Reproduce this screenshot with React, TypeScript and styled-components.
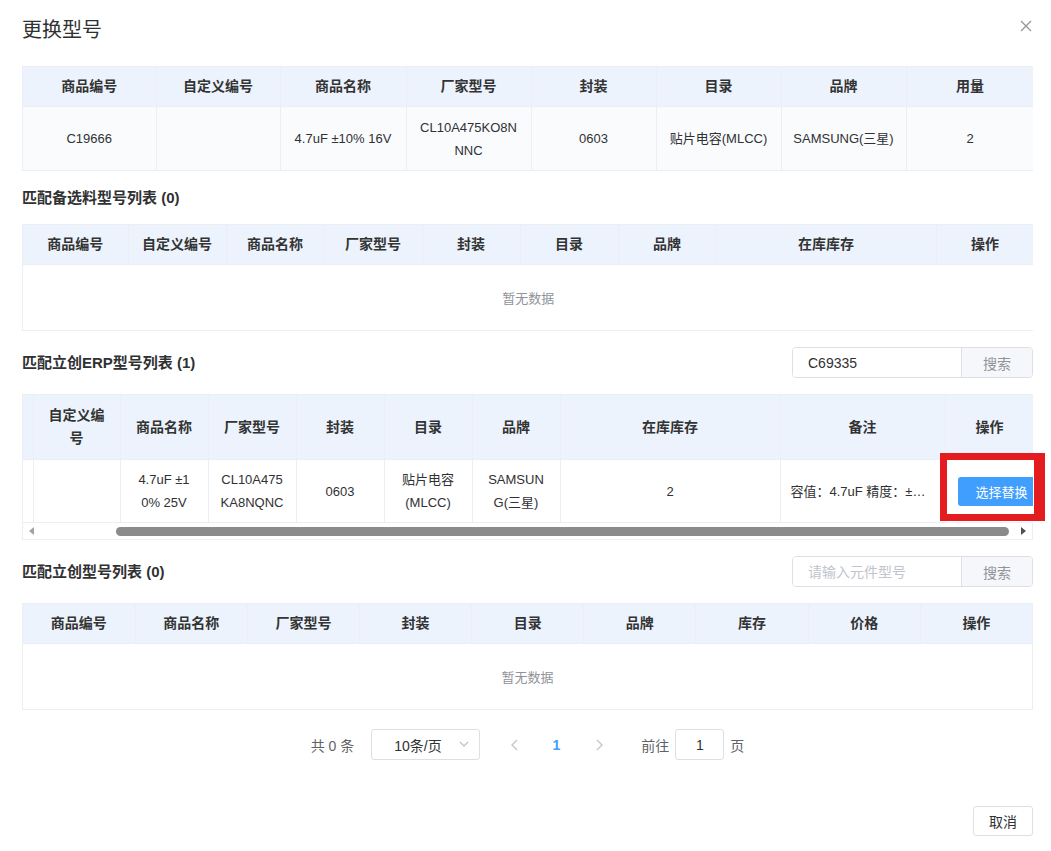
import React from 'react';
import styled, { createGlobalStyle } from 'styled-components';

const borderColor = '#ebeef5';
const headBg = '#ecf3fd';
const textMain = '#303133';
const textMuted = '#909399';
const blue = '#409eff';

const GlobalStyle = createGlobalStyle`
  * { box-sizing: border-box; }
  body {
    margin: 0;
    background: #fff;
    font-family: "Liberation Sans", "Noto Sans CJK SC", sans-serif;
    color: ${textMain};
  }
`;

const Dialog = styled.div`
  width: 1051px;
  padding: 0 18px 0 22px;
`;

const Header = styled.div`
  display: flex;
  justify-content: space-between;
  align-items: center;
  padding-top: 18px;
  margin-bottom: 24px;
`;

const Title = styled.h2`
  margin: 0;
  font-size: 20px;
  line-height: 24px;
  font-weight: 400;
  color: ${textMain};
`;

const CloseBtn = styled.button`
  border: 0;
  background: none;
  padding: 0;
  width: 14px;
  height: 14px;
  margin-top: -8px;
  display: flex;
  align-items: center;
  justify-content: center;
  cursor: pointer;
`;

const TableBox = styled.div`
  border: 1px solid ${borderColor};
  border-right: none;
  border-bottom: none;
  overflow: hidden;
`;

const Table = styled.table`
  width: 100%;
  table-layout: fixed;
  border-collapse: collapse;
`;

const Th = styled.th<{ $py?: number }>`
  background: ${headBg};
  color: #333;
  font-size: 14px;
  font-weight: 700;
  line-height: 23px;
  padding: ${({ $py }) => $py ?? 8}px 10px;
  border-right: 1px solid ${borderColor};
  border-bottom: 1px solid ${borderColor};
  text-align: center;
`;

const Td = styled.td<{ $py?: number; $bg?: string; $align?: string }>`
  font-size: 13px;
  line-height: 23px;
  color: ${textMain};
  padding: ${({ $py }) => $py ?? 8}px 10px;
  background: ${({ $bg }) => $bg ?? '#fff'};
  border-right: 1px solid ${borderColor};
  border-bottom: 1px solid ${borderColor};
  text-align: ${({ $align }) => $align ?? 'center'};
  white-space: pre-line;
`;

const NoteTd = styled(Td)`
  padding-right: 16px;
  white-space: nowrap;
  overflow: hidden;
  text-overflow: ellipsis;
`;

const OpTd = styled(Td)`
  padding-left: 12px;
  padding-right: 0;
  white-space: nowrap;
  overflow: hidden;
`;

const EmptyTd = styled.td`
  height: 66px;
  text-align: center;
  font-size: 13px;
  color: ${textMuted};
  border-right: 1px solid ${borderColor};
  border-bottom: 1px solid ${borderColor};
`;

const SectionHead = styled.div`
  display: flex;
  justify-content: space-between;
  align-items: center;
  padding: 16px 0;
`;

const SectionTitle = styled.h3`
  margin: 0;
  font-size: 15px;
  line-height: 21px;
  font-weight: 700;
  color: ${textMain};
`;

const SearchGroup = styled.div`
  display: flex;
  height: 31px;
  width: 241px;
  border: 1px solid #dcdfe6;
  border-radius: 4px;
  overflow: hidden;
`;

const SearchInput = styled.input`
  width: 168px;
  border: 0;
  outline: none;
  padding: 0 15px;
  font-size: 14px;
  font-family: inherit;
  color: ${textMain};

  &::placeholder {
    color: #c0c4cc;
  }
`;

const SearchBtn = styled.button`
  flex: 1;
  border: 0;
  border-left: 1px solid #dcdfe6;
  background: #f5f7fa;
  color: ${textMuted};
  font-size: 14px;
  font-family: inherit;
  cursor: pointer;
`;

const ErpWrap = styled.div`
  position: relative;
`;

const PrimaryBtn = styled.button`
  height: 29px;
  padding: 0 18px;
  border: 0;
  border-radius: 3px;
  background: ${blue};
  color: #fff;
  font-size: 13px;
  font-family: inherit;
  cursor: pointer;
`;

const Scrollbar = styled.div`
  display: flex;
  align-items: center;
  height: 17px;
  background: #fff;
  border-right: 1px solid ${borderColor};
  border-bottom: 1px solid ${borderColor};
`;

const ScrollArrow = styled.div<{ $dir: 'left' | 'right'; $dim?: boolean }>`
  width: 17px;
  height: 17px;
  display: flex;
  align-items: center;
  justify-content: center;

  &::before {
    content: '';
    border-top: 4px solid transparent;
    border-bottom: 4px solid transparent;
    ${({ $dir, $dim }) =>
      $dir === 'left'
        ? `border-right: 5px solid ${$dim ? '#a3a3a3' : '#505050'};`
        : `border-left: 5px solid ${$dim ? '#a3a3a3' : '#505050'};`}
  }
`;

const ScrollTrack = styled.div`
  flex: 1;
  display: flex;
  height: 100%;
  align-items: center;
`;

const ScrollThumb = styled.div`
  height: 9px;
  border-radius: 5px;
  background: #8b8b8b;
`;

const Highlight = styled.div`
  position: absolute;
  left: 918px;
  top: 59px;
  width: 105px;
  height: 68px;
  border-style: solid;
  border-color: #e41b1f;
  border-width: 7px 11px 7px 7px;
  pointer-events: none;
`;

const Pagination = styled.div`
  display: flex;
  justify-content: center;
  align-items: center;
  height: 31px;
  margin-top: 19px;
  font-size: 14px;
  color: #606266;
`;

const Total = styled.span`
  margin-right: 17px;
`;

const SizeSelect = styled.div`
  position: relative;
  width: 109px;
  height: 31px;
  border: 1px solid #dcdfe6;
  border-radius: 3px;
  display: flex;
  align-items: center;
  padding-left: 22px;
  color: ${textMain};
  font-size: 14px;
`;

const SelectArrow = styled.span`
  position: absolute;
  right: 10px;
  top: 11px;
  display: flex;
`;

const PagerBtn = styled.button<{ $ml: number }>`
  width: 30px;
  height: 31px;
  margin-left: ${({ $ml }) => $ml}px;
  border: 0;
  background: none;
  padding: 0;
  display: flex;
  align-items: center;
  justify-content: center;
  cursor: not-allowed;
`;

const PageNum = styled.span`
  width: 30px;
  margin-left: 12px;
  text-align: center;
  color: ${blue};
  font-weight: 700;
  font-size: 14px;
`;

const Jumper = styled.span`
  display: flex;
  align-items: center;
  margin-left: 27px;
  gap: 6px;
`;

const JumpInput = styled.input`
  width: 49px;
  height: 31px;
  border: 1px solid #dcdfe6;
  border-radius: 3px;
  text-align: center;
  font-size: 14px;
  font-family: inherit;
  color: ${textMain};
  outline: none;
`;

const Footer = styled.div`
  display: flex;
  justify-content: flex-end;
  margin-top: 46px;
`;

const PlainBtn = styled.button`
  width: 60px;
  height: 30px;
  border: 1px solid #dcdfe6;
  border-radius: 3px;
  background: #fff;
  color: ${textMain};
  font-size: 14px;
  font-family: inherit;
  cursor: pointer;
`;

const Chevron = ({ dir, color }: { dir: 'left' | 'right' | 'down'; color: string }) => {
  const pts = dir === 'left' ? '7,1 2,6 7,11' : dir === 'right' ? '2,1 7,6 2,11' : '1,1 5,5 9,1';
  const size = dir === 'down' ? { w: 10, h: 7 } : { w: 9, h: 12 };
  return (
    <svg width={size.w} height={size.h} viewBox={`0 0 ${size.w} ${size.h}`}>
      <polyline points={pts} fill="none" stroke={color} strokeWidth="1.3" />
    </svg>
  );
};

const mainCols = [133, 124, 126, 125, 125, 125, 125, 128];
const mainHead = ['商品编号', '自定义编号', '商品名称', '厂家型号', '封装', '目录', '品牌', '用量'];
const mainRow = ['C19666', '', '4.7uF ±10% 16V', 'CL10A475KO8N\nNNC', '0603', '贴片电容(MLCC)', 'SAMSUNG(三星)', '2'];

const altCols = [105, 98, 98, 98, 98, 98, 98, 220, 98];
const altHead = ['商品编号', '自定义编号', '商品名称', '厂家型号', '封装', '目录', '品牌', '在库库存', '操作'];

const erpCols = [10, 87, 88, 88, 88, 88, 88, 220, 165, 89];
const erpHead = ['', '自定义编号', '商品名称', '厂家型号', '封装', '目录', '品牌', '在库库存', '备注', '操作'];
const erpRow = ['', '', '4.7uF ±1\n0% 25V', 'CL10A475\nKA8NQNC', '0603', '贴片电容\n(MLCC)', 'SAMSUN\nG(三星)', '2'];

const lcscHead = ['商品编号', '商品名称', '厂家型号', '封装', '目录', '品牌', '库存', '价格', '操作'];

const Cols = ({ widths }: { widths: number[] }) => (
  <colgroup>
    {widths.map((w, i) => (
      <col key={i} width={w} />
    ))}
  </colgroup>
);

const EmptyTable = ({ head, widths }: { head: string[]; widths?: number[] }) => (
  <TableBox>
    <Table>
      {widths && <Cols widths={widths} />}
      <thead>
        <tr>
          {head.map(h => (
            <Th key={h}>{h}</Th>
          ))}
        </tr>
      </thead>
      <tbody>
        <tr>
          <EmptyTd colSpan={head.length}>暂无数据</EmptyTd>
        </tr>
      </tbody>
    </Table>
  </TableBox>
);

const App: React.FC = () => {
  return (
    <>
      <GlobalStyle />
      <Dialog>
        <Header>
          <Title>更换型号</Title>
          <CloseBtn aria-label="关闭">
            <svg width="12" height="12" viewBox="0 0 12 12">
              <path d="M1 1 L11 11 M11 1 L1 11" stroke={textMuted} strokeWidth="1.2" />
            </svg>
          </CloseBtn>
        </Header>

        <TableBox>
          <Table>
            <Cols widths={mainCols} />
            <thead>
              <tr>
                {mainHead.map(h => (
                  <Th key={h}>{h}</Th>
                ))}
              </tr>
            </thead>
            <tbody>
              <tr>
                {mainRow.map((v, i) => (
                  <Td key={i} $py={8.5} $bg="#fafbfd">
                    {v}
                  </Td>
                ))}
              </tr>
            </tbody>
          </Table>
        </TableBox>

        <SectionHead>
          <SectionTitle>匹配备选料型号列表 (0)</SectionTitle>
        </SectionHead>
        <EmptyTable head={altHead} widths={altCols} />

        <SectionHead>
          <SectionTitle>匹配立创ERP型号列表 (1)</SectionTitle>
          <SearchGroup>
            <SearchInput defaultValue="C69335" />
            <SearchBtn>搜索</SearchBtn>
          </SearchGroup>
        </SectionHead>
        <ErpWrap>
          <TableBox>
            <Table>
              <Cols widths={erpCols} />
              <thead>
                <tr>
                  {erpHead.map((h, i) => (
                    <Th key={i} $py={9}>
                      {h}
                    </Th>
                  ))}
                </tr>
              </thead>
              <tbody>
                <tr>
                  {erpRow.map((v, i) => (
                    <Td key={i}>{v}</Td>
                  ))}
                  <NoteTd $align="left">容值：4.7uF 精度：±10% 额定电压：25V</NoteTd>
                  <OpTd $align="left">
                    <PrimaryBtn>选择替换</PrimaryBtn>
                  </OpTd>
                </tr>
              </tbody>
            </Table>
            <Scrollbar>
              <ScrollArrow $dir="left" $dim />
              <ScrollTrack>
                <ScrollThumb style={{ marginLeft: 76, marginRight: 6, flex: 1 }} />
              </ScrollTrack>
              <ScrollArrow $dir="right" />
            </Scrollbar>
          </TableBox>
          <Highlight />
        </ErpWrap>

        <SectionHead>
          <SectionTitle>匹配立创型号列表 (0)</SectionTitle>
          <SearchGroup>
            <SearchInput placeholder="请输入元件型号" />
            <SearchBtn>搜索</SearchBtn>
          </SearchGroup>
        </SectionHead>
        <EmptyTable head={lcscHead} />

        <Pagination>
          <Total>共 0 条</Total>
          <SizeSelect>
            10条/页
            <SelectArrow>
              <Chevron dir="down" color="#c0c4cc" />
            </SelectArrow>
          </SizeSelect>
          <PagerBtn $ml={19}>
            <Chevron dir="left" color="#c0c4cc" />
          </PagerBtn>
          <PageNum>1</PageNum>
          <PagerBtn $ml={13}>
            <Chevron dir="right" color="#c0c4cc" />
          </PagerBtn>
          <Jumper>
            前往
            <JumpInput defaultValue="1" />
            页
          </Jumper>
        </Pagination>

        <Footer>
          <PlainBtn>取消</PlainBtn>
        </Footer>
      </Dialog>
    </>
  );
};

export default App;
